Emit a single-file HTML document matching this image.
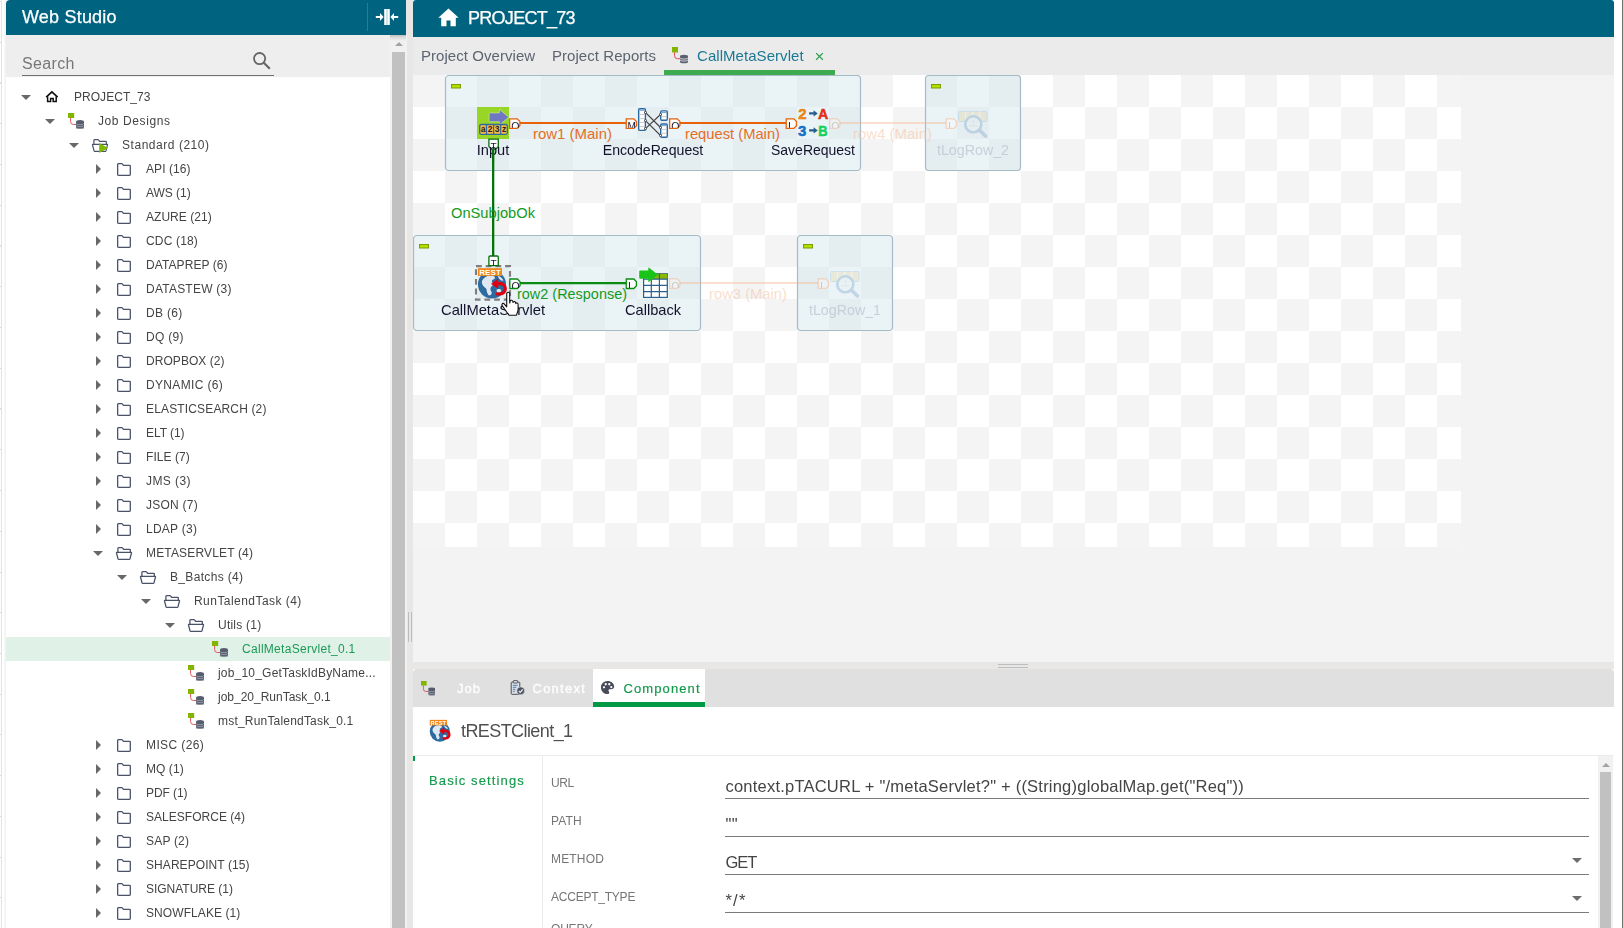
<!DOCTYPE html>
<html lang="en">
<head>
<meta charset="utf-8">
<title>Web Studio</title>
<style>
*{box-sizing:border-box;margin:0;padding:0}
html,body{width:1623px;height:928px;overflow:hidden;background:#fff}
body{font-family:"Liberation Sans",Arial,sans-serif;position:relative;color:#444}
.abs{position:absolute}
.gl{left:0;top:0;width:1623px;height:928px;will-change:transform}
#edgeL{left:1px;top:0;width:1px;height:928px;background:#e2e2e2}
#edgeL2{left:4px;top:0;width:2px;height:928px;background:linear-gradient(to right,#fafafa,#efefef)}
#ticks{left:0;top:0;width:1px;height:928px;background:repeating-linear-gradient(to bottom,transparent 0,transparent 1px,#dcdcdc 1px,#dcdcdc 2px,transparent 2px,transparent 40.750px)}
#edgeR{left:1622px;top:0;width:1px;height:928px;background:#6e6e6e}
/* sidebar */
#sbh{left:6px;top:0;width:400px;height:35px;background:#006480;border-top-left-radius:4px;color:#fff}
#sbh .t{position:absolute;left:16px;top:6px;font-size:18px;line-height:22px;letter-spacing:.2px;white-space:nowrap;-webkit-text-stroke:.25px #fff}
#sbh .sep{position:absolute;left:361px;top:3px;width:1px;height:28px;background:#2b7c93}
#sbh svg{position:absolute;left:369px;top:8px}
#search{left:6px;top:35px;width:384px;height:42px;background:#eeeeee}
#search .ph{position:absolute;left:16px;top:19px;font-size:16px;line-height:20px;color:#777;letter-spacing:.35px}
#search .ul{position:absolute;left:16px;top:40px;width:252px;height:1px;background:#707070}
#search svg{position:absolute;left:245px;top:15px}
#tree{left:6px;top:77px;width:384px;height:851px;background:#fff;padding-top:8px;overflow:hidden}
.tr{height:24px;display:flex;align-items:center;white-space:nowrap;font-size:12px;color:#444}
.tr.sel{background:#e0f1e8;color:#1b9a55}
.aw{width:26px;height:24px;flex:none;position:relative}
.ad{position:absolute;left:3px;top:9.5px;border-left:5px solid transparent;border-right:5px solid transparent;border-top:5px solid #686868}
.ar{position:absolute;left:6px;top:7px;border-top:5px solid transparent;border-bottom:5px solid transparent;border-left:5.5px solid #686868}
.ti{width:16px;height:16px;flex:none;display:block;overflow:visible}
.tx{margin-left:14px;position:relative;top:-.5px}
#sbar{z-index:2;left:390px;top:35px;width:17px;height:893px;background:#f1f1f1}
#sbar .sh{position:absolute;left:0;top:0;width:16px;height:6px;background:linear-gradient(#bdbdbd,#dedede 45%,#f1f1f1)}
#sbar .up{position:absolute;left:4.500px;top:7px;border-left:4px solid transparent;border-right:4px solid transparent;border-bottom:4px solid #a3a3a3}
#sbar .th{position:absolute;left:2px;top:17px;width:13px;height:880px;background:#c1c1c1}
#split{left:406px;top:0;width:7px;height:928px;background:#e9e6e6}
#split i{position:absolute;top:612px;width:1px;height:30px;background:#bdbdbd}
/* main */
#mh{left:413px;top:0;width:1201px;height:37px;background:#006480;border-top-left-radius:3px;border-top-right-radius:3px;color:#fff}
#mh svg{position:absolute;left:25px;top:8px}
#mh .t{position:absolute;left:55px;top:7px;font-size:18px;line-height:22px;letter-spacing:-.72px;white-space:nowrap;-webkit-text-stroke:.25px #fff}
#tabs{left:413px;top:37px;width:1201px;height:38px;background:#ebebeb;font-size:15px;color:#5d6470;letter-spacing:.05px}
#tabs span{position:absolute;top:9px;line-height:20px;white-space:nowrap}
#tabs .act{color:#1b7893}
#tabs .bar{position:absolute;left:251px;top:33px;width:171px;height:5px;background:#3fab50}
#canvas{left:413px;top:75px;width:1201px;height:587px;background:#f3f3f3}
#hsplit{left:413px;top:662px;width:1201px;height:7px;background:#e9e6e6}
#hsplit i{position:absolute;left:585px;width:30px;height:1px;background:#bdbdbd}
/* bottom */
#btabs{left:413px;top:669px;width:1201px;height:38px;background:#e0e0e0;border-top-left-radius:4px;border-top-right-radius:4px;font-size:13px;color:#fdfdfd;-webkit-text-stroke:.4px}
#btabs span{position:absolute;top:12px;line-height:16px;white-space:nowrap}
#btabs .on{position:absolute;left:180px;top:0;width:112px;height:38px;background:#fff;border-bottom:5px solid #009a44}
#btabs svg{position:absolute}
#bpanel{left:413px;top:707px;width:1201px;height:221px;background:#fff}
#bpanel .ttl{position:absolute;left:48px;top:12px;font-size:18px;line-height:24px;color:#505050;letter-spacing:-.58px;white-space:nowrap}
#bpanel .hr{position:absolute;left:0;top:48px;width:1201px;height:1px;background:#ececec}
#bpanel .vr{position:absolute;left:129px;top:49px;width:1px;height:172px;background:#ececec}
#bpanel .gm{position:absolute;left:0;top:49px;width:2px;height:5px;background:#009a44}
#bpanel .nav{position:absolute;left:16px;top:65.700px;font-size:13px;line-height:16px;color:#149a4c;letter-spacing:1.12px;white-space:nowrap;-webkit-text-stroke:.15px #149a4c}
.lb{position:absolute;left:138px;font-size:12px;line-height:14px;color:#757575;letter-spacing:.2px;white-space:nowrap}
.vl{position:absolute;left:312.500px;font-size:16.500px;line-height:20px;color:#444;white-space:nowrap}
.ul2{position:absolute;left:312px;width:864px;height:1px;background:#7a7a7a}
.dd{position:absolute;left:1159px;border-left:5.5px solid transparent;border-right:5.5px solid transparent;border-top:5.5px solid #6d6d6d}
#bsb{position:absolute;left:1185px;top:49px;width:15px;height:172px;background:#f1f1f1}
#bsb .up{position:absolute;left:4px;top:7px;border-left:4px solid transparent;border-right:4px solid transparent;border-bottom:4px solid #a3a3a3}
#bsb .th{position:absolute;left:2px;top:16px;width:11px;height:160px;background:#c1c1c1}
</style>
</head>
<body>
<div class="abs gl">
<div class="abs" id="edgeL"></div><div class="abs" id="edgeL2"></div><div class="abs" id="ticks"></div>
<div class="abs" id="edgeR"></div>
<div class="abs" id="sbh"><span class="t">Web Studio</span><i class="sep"></i>
<svg width="24" height="18" viewBox="0 0 24 18"><path d="M9.2 1h5.6v16H9.2z" fill="#fff"/><path d="M11.3 1h1.4v16h-1.4z" fill="#bcd9e1"/><path d="M.8 7.900h4.200V4.900L8.600 9 5 13.100V10.100H.8zM23.200 7.900H19V4.900L15.400 9l3.600 4.100V10.100h4.200z" fill="#fff"/></svg>
</div>
<div class="abs" id="search"><span class="ph">Search</span><i class="ul"></i>
<svg width="22" height="22" viewBox="0 0 22 22"><circle cx="8.6" cy="8.6" r="5.6" fill="none" stroke="#666" stroke-width="1.8"/><path d="M12.8 12.8l6 6" stroke="#666" stroke-width="2.2"/></svg>
</div>
<div class="abs" id="tree">
<div class="tr" style="padding-left:12px"><span class="aw"><i class="ad"></i></span><svg class="ti" viewBox="0 0 16 16"><path d="M2.2 8.1 7.9 2.9l5.7 5.200" fill="none" stroke="#111" stroke-width="1.700"/><path d="M3.600 7.400v5.200h3V9.400h2.600v3.200h3V7.400" fill="none" stroke="#111" stroke-width="1.500"/></svg><span class="tx" style="letter-spacing:0.037px">PROJECT_73</span></div>
<div class="tr" style="padding-left:36px"><span class="aw"><i class="ad"></i></span><svg class="ti" viewBox="0 0 16 16"><rect x="0" y="0" width="6.2" height="5" fill="#82b400"/><path d="M2.6 5v3.6q0 2.9 2.9 2.9h2.7" fill="none" stroke="#e25555" stroke-width="1"/><path d="M8 8.6a4 1.6 0 0 1 8 0v5.8a4 1.6 0 0 1-8 0z" fill="#565c6c"/><path d="M8 10.3a4 1.4 0 0 0 8 0M8 12.3a4 1.4 0 0 0 8 0M8 14.3a4 1.4 0 0 0 8 0" fill="none" stroke="#b9bec8" stroke-width=".6"/></svg><span class="tx" style="letter-spacing:0.587px">Job Designs</span></div>
<div class="tr" style="padding-left:60px"><span class="aw"><i class="ad"></i></span><svg class="ti" viewBox="0 0 16 16"><path d="M1.900 7.300V3.400q0-.75.750-.75h3.200q.4 0 .650.3l1.100 1.400h6q.750 0 .750.750V7.300M.9 7.300h14.200q.5 0 .4.500l-1.500 5.900q-.2.650-.850.650H2.850q-.650 0-.850-.650L.5 7.800q-.1-.5.400-.5z" fill="none" stroke="#4a5268" stroke-width="1.200"/><path d="M7.200 6v10.100l8.800-5z" fill="#82b800"/></svg><span class="tx" style="letter-spacing:0.538px">Standard (210)</span></div>
<div class="tr" style="padding-left:84px"><span class="aw"><i class="ar"></i></span><svg class="ti" viewBox="0 0 16 16"><path d="M1.650 3.400q0-.75.750-.75h3.300q.4 0 .650.3l1.100 1.400h6.100q.750 0 .750.750v8.500q0 .750-.750.750H2.400q-.750 0-.750-.750z" fill="none" stroke="#4a5268" stroke-width="1.300"/></svg><span class="tx" style="letter-spacing:0.086px">API (16)</span></div>
<div class="tr" style="padding-left:84px"><span class="aw"><i class="ar"></i></span><svg class="ti" viewBox="0 0 16 16"><path d="M1.650 3.400q0-.75.750-.75h3.300q.4 0 .650.3l1.100 1.400h6.100q.750 0 .750.750v8.500q0 .750-.750.750H2.400q-.750 0-.750-.750z" fill="none" stroke="#4a5268" stroke-width="1.300"/></svg><span class="tx" style="letter-spacing:-0.027px">AWS (1)</span></div>
<div class="tr" style="padding-left:84px"><span class="aw"><i class="ar"></i></span><svg class="ti" viewBox="0 0 16 16"><path d="M1.650 3.400q0-.75.750-.75h3.300q.4 0 .650.3l1.100 1.400h6.100q.750 0 .750.750v8.500q0 .750-.750.750H2.400q-.750 0-.750-.750z" fill="none" stroke="#4a5268" stroke-width="1.300"/></svg><span class="tx" style="letter-spacing:0.036px">AZURE (21)</span></div>
<div class="tr" style="padding-left:84px"><span class="aw"><i class="ar"></i></span><svg class="ti" viewBox="0 0 16 16"><path d="M1.650 3.400q0-.75.750-.75h3.300q.4 0 .650.3l1.100 1.400h6.100q.750 0 .750.750v8.500q0 .750-.750.750H2.400q-.750 0-.750-.750z" fill="none" stroke="#4a5268" stroke-width="1.300"/></svg><span class="tx" style="letter-spacing:0.166px">CDC (18)</span></div>
<div class="tr" style="padding-left:84px"><span class="aw"><i class="ar"></i></span><svg class="ti" viewBox="0 0 16 16"><path d="M1.650 3.400q0-.75.750-.75h3.300q.4 0 .650.3l1.100 1.400h6.100q.750 0 .750.750v8.500q0 .750-.750.750H2.400q-.750 0-.750-.750z" fill="none" stroke="#4a5268" stroke-width="1.300"/></svg><span class="tx" style="letter-spacing:0.084px">DATAPREP (6)</span></div>
<div class="tr" style="padding-left:84px"><span class="aw"><i class="ar"></i></span><svg class="ti" viewBox="0 0 16 16"><path d="M1.650 3.400q0-.75.750-.75h3.300q.4 0 .650.3l1.100 1.400h6.100q.750 0 .750.750v8.500q0 .750-.750.750H2.400q-.750 0-.750-.750z" fill="none" stroke="#4a5268" stroke-width="1.300"/></svg><span class="tx" style="letter-spacing:0.226px">DATASTEW (3)</span></div>
<div class="tr" style="padding-left:84px"><span class="aw"><i class="ar"></i></span><svg class="ti" viewBox="0 0 16 16"><path d="M1.650 3.400q0-.75.750-.75h3.300q.4 0 .650.3l1.100 1.400h6.100q.750 0 .750.750v8.500q0 .750-.750.750H2.400q-.750 0-.750-.750z" fill="none" stroke="#4a5268" stroke-width="1.300"/></svg><span class="tx" style="letter-spacing:0.305px">DB (6)</span></div>
<div class="tr" style="padding-left:84px"><span class="aw"><i class="ar"></i></span><svg class="ti" viewBox="0 0 16 16"><path d="M1.650 3.400q0-.75.750-.75h3.300q.4 0 .650.3l1.100 1.400h6.100q.750 0 .750.750v8.500q0 .750-.750.750H2.400q-.750 0-.750-.750z" fill="none" stroke="#4a5268" stroke-width="1.300"/></svg><span class="tx" style="letter-spacing:0.283px">DQ (9)</span></div>
<div class="tr" style="padding-left:84px"><span class="aw"><i class="ar"></i></span><svg class="ti" viewBox="0 0 16 16"><path d="M1.650 3.400q0-.75.750-.75h3.300q.4 0 .650.3l1.100 1.400h6.100q.750 0 .750.750v8.500q0 .750-.750.750H2.400q-.750 0-.750-.750z" fill="none" stroke="#4a5268" stroke-width="1.300"/></svg><span class="tx" style="letter-spacing:0.053px">DROPBOX (2)</span></div>
<div class="tr" style="padding-left:84px"><span class="aw"><i class="ar"></i></span><svg class="ti" viewBox="0 0 16 16"><path d="M1.650 3.400q0-.75.750-.75h3.300q.4 0 .650.3l1.100 1.400h6.100q.750 0 .750.750v8.500q0 .750-.750.750H2.400q-.750 0-.750-.750z" fill="none" stroke="#4a5268" stroke-width="1.300"/></svg><span class="tx" style="letter-spacing:0.341px">DYNAMIC (6)</span></div>
<div class="tr" style="padding-left:84px"><span class="aw"><i class="ar"></i></span><svg class="ti" viewBox="0 0 16 16"><path d="M1.650 3.400q0-.75.750-.75h3.300q.4 0 .650.3l1.100 1.400h6.100q.750 0 .750.750v8.500q0 .750-.750.750H2.400q-.750 0-.750-.750z" fill="none" stroke="#4a5268" stroke-width="1.300"/></svg><span class="tx" style="letter-spacing:0.151px">ELASTICSEARCH (2)</span></div>
<div class="tr" style="padding-left:84px"><span class="aw"><i class="ar"></i></span><svg class="ti" viewBox="0 0 16 16"><path d="M1.650 3.400q0-.75.750-.75h3.300q.4 0 .650.3l1.100 1.400h6.100q.750 0 .750.750v8.500q0 .750-.750.750H2.400q-.750 0-.750-.750z" fill="none" stroke="#4a5268" stroke-width="1.300"/></svg><span class="tx" style="letter-spacing:-0.058px">ELT (1)</span></div>
<div class="tr" style="padding-left:84px"><span class="aw"><i class="ar"></i></span><svg class="ti" viewBox="0 0 16 16"><path d="M1.650 3.400q0-.75.750-.75h3.300q.4 0 .650.3l1.100 1.400h6.100q.750 0 .750.750v8.500q0 .750-.750.750H2.400q-.750 0-.750-.750z" fill="none" stroke="#4a5268" stroke-width="1.300"/></svg><span class="tx" style="letter-spacing:0.045px">FILE (7)</span></div>
<div class="tr" style="padding-left:84px"><span class="aw"><i class="ar"></i></span><svg class="ti" viewBox="0 0 16 16"><path d="M1.650 3.400q0-.75.750-.75h3.300q.4 0 .650.3l1.100 1.400h6.100q.750 0 .750.750v8.500q0 .750-.750.750H2.400q-.750 0-.750-.750z" fill="none" stroke="#4a5268" stroke-width="1.300"/></svg><span class="tx" style="letter-spacing:0.429px">JMS (3)</span></div>
<div class="tr" style="padding-left:84px"><span class="aw"><i class="ar"></i></span><svg class="ti" viewBox="0 0 16 16"><path d="M1.650 3.400q0-.75.750-.75h3.300q.4 0 .650.3l1.100 1.400h6.100q.750 0 .750.750v8.500q0 .750-.750.750H2.400q-.750 0-.750-.750z" fill="none" stroke="#4a5268" stroke-width="1.300"/></svg><span class="tx" style="letter-spacing:0.248px">JSON (7)</span></div>
<div class="tr" style="padding-left:84px"><span class="aw"><i class="ar"></i></span><svg class="ti" viewBox="0 0 16 16"><path d="M1.650 3.400q0-.75.750-.75h3.300q.4 0 .650.3l1.100 1.400h6.100q.750 0 .750.750v8.500q0 .750-.750.750H2.400q-.750 0-.750-.750z" fill="none" stroke="#4a5268" stroke-width="1.300"/></svg><span class="tx" style="letter-spacing:0.257px">LDAP (3)</span></div>
<div class="tr" style="padding-left:84px"><span class="aw"><i class="ad"></i></span><svg class="ti" viewBox="0 0 16 16"><path d="M1.900 7.300V3.400q0-.75.750-.75h3.200q.4 0 .650.3l1.100 1.400h6q.750 0 .750.750V7.300M.9 7.300h14.200q.5 0 .4.500l-1.500 5.900q-.2.650-.850.650H2.850q-.650 0-.850-.650L.5 7.800q-.1-.5.400-.5z" fill="none" stroke="#4a5268" stroke-width="1.300"/></svg><span class="tx" style="letter-spacing:0.160px">METASERVLET (4)</span></div>
<div class="tr" style="padding-left:108px"><span class="aw"><i class="ad"></i></span><svg class="ti" viewBox="0 0 16 16"><path d="M1.900 7.300V3.400q0-.75.750-.75h3.200q.4 0 .650.3l1.100 1.400h6q.750 0 .750.750V7.300M.9 7.300h14.200q.5 0 .4.500l-1.500 5.900q-.2.650-.850.650H2.850q-.650 0-.850-.650L.5 7.800q-.1-.5.400-.5z" fill="none" stroke="#4a5268" stroke-width="1.300"/></svg><span class="tx" style="letter-spacing:0.327px">B_Batchs (4)</span></div>
<div class="tr" style="padding-left:132px"><span class="aw"><i class="ad"></i></span><svg class="ti" viewBox="0 0 16 16"><path d="M1.900 7.300V3.400q0-.75.750-.75h3.200q.4 0 .650.3l1.100 1.400h6q.750 0 .750.750V7.300M.9 7.300h14.200q.5 0 .4.500l-1.500 5.900q-.2.650-.850.650H2.850q-.650 0-.850-.650L.5 7.800q-.1-.5.400-.5z" fill="none" stroke="#4a5268" stroke-width="1.300"/></svg><span class="tx" style="letter-spacing:0.455px">RunTalendTask (4)</span></div>
<div class="tr" style="padding-left:156px"><span class="aw"><i class="ad"></i></span><svg class="ti" viewBox="0 0 16 16"><path d="M1.900 7.300V3.400q0-.75.750-.75h3.200q.4 0 .650.3l1.100 1.400h6q.750 0 .750.750V7.300M.9 7.300h14.200q.5 0 .4.500l-1.500 5.900q-.2.650-.850.650H2.850q-.650 0-.850-.650L.5 7.800q-.1-.5.400-.5z" fill="none" stroke="#4a5268" stroke-width="1.300"/></svg><span class="tx" style="letter-spacing:0.228px">Utils (1)</span></div>
<div class="tr sel" style="padding-left:180px"><span class="aw"></span><svg class="ti" viewBox="0 0 16 16"><rect x="0" y="0" width="6.2" height="5" fill="#82b400"/><path d="M2.6 5v3.6q0 2.9 2.9 2.9h2.7" fill="none" stroke="#e25555" stroke-width="1"/><path d="M8 8.6a4 1.6 0 0 1 8 0v5.8a4 1.6 0 0 1-8 0z" fill="#565c6c"/><path d="M8 10.3a4 1.4 0 0 0 8 0M8 12.3a4 1.4 0 0 0 8 0M8 14.3a4 1.4 0 0 0 8 0" fill="none" stroke="#b9bec8" stroke-width=".6"/></svg><span class="tx" style="letter-spacing:0.291px">CallMetaServlet_0.1</span></div>
<div class="tr" style="padding-left:156px"><span class="aw"></span><svg class="ti" viewBox="0 0 16 16"><rect x="0" y="0" width="6.2" height="5" fill="#82b400"/><path d="M2.6 5v3.6q0 2.9 2.9 2.9h2.7" fill="none" stroke="#e25555" stroke-width="1"/><path d="M8 8.6a4 1.6 0 0 1 8 0v5.8a4 1.6 0 0 1-8 0z" fill="#565c6c"/><path d="M8 10.3a4 1.4 0 0 0 8 0M8 12.3a4 1.4 0 0 0 8 0M8 14.3a4 1.4 0 0 0 8 0" fill="none" stroke="#b9bec8" stroke-width=".6"/></svg><span class="tx" style="letter-spacing:0.202px">job_10_GetTaskIdByName...</span></div>
<div class="tr" style="padding-left:156px"><span class="aw"></span><svg class="ti" viewBox="0 0 16 16"><rect x="0" y="0" width="6.2" height="5" fill="#82b400"/><path d="M2.6 5v3.6q0 2.9 2.9 2.9h2.7" fill="none" stroke="#e25555" stroke-width="1"/><path d="M8 8.6a4 1.6 0 0 1 8 0v5.8a4 1.6 0 0 1-8 0z" fill="#565c6c"/><path d="M8 10.3a4 1.4 0 0 0 8 0M8 12.3a4 1.4 0 0 0 8 0M8 14.3a4 1.4 0 0 0 8 0" fill="none" stroke="#b9bec8" stroke-width=".6"/></svg><span class="tx" style="letter-spacing:-0.004px">job_20_RunTask_0.1</span></div>
<div class="tr" style="padding-left:156px"><span class="aw"></span><svg class="ti" viewBox="0 0 16 16"><rect x="0" y="0" width="6.2" height="5" fill="#82b400"/><path d="M2.6 5v3.6q0 2.9 2.9 2.9h2.7" fill="none" stroke="#e25555" stroke-width="1"/><path d="M8 8.6a4 1.6 0 0 1 8 0v5.8a4 1.6 0 0 1-8 0z" fill="#565c6c"/><path d="M8 10.3a4 1.4 0 0 0 8 0M8 12.3a4 1.4 0 0 0 8 0M8 14.3a4 1.4 0 0 0 8 0" fill="none" stroke="#b9bec8" stroke-width=".6"/></svg><span class="tx" style="letter-spacing:0.194px">mst_RunTalendTask_0.1</span></div>
<div class="tr" style="padding-left:84px"><span class="aw"><i class="ar"></i></span><svg class="ti" viewBox="0 0 16 16"><path d="M1.650 3.400q0-.75.750-.75h3.300q.4 0 .650.3l1.100 1.400h6.100q.750 0 .750.750v8.500q0 .750-.750.750H2.400q-.750 0-.750-.750z" fill="none" stroke="#4a5268" stroke-width="1.300"/></svg><span class="tx" style="letter-spacing:0.390px">MISC (26)</span></div>
<div class="tr" style="padding-left:84px"><span class="aw"><i class="ar"></i></span><svg class="ti" viewBox="0 0 16 16"><path d="M1.650 3.400q0-.75.750-.75h3.300q.4 0 .650.3l1.100 1.400h6.100q.750 0 .750.750v8.500q0 .750-.750.750H2.400q-.750 0-.750-.750z" fill="none" stroke="#4a5268" stroke-width="1.300"/></svg><span class="tx" style="letter-spacing:0.059px">MQ (1)</span></div>
<div class="tr" style="padding-left:84px"><span class="aw"><i class="ar"></i></span><svg class="ti" viewBox="0 0 16 16"><path d="M1.650 3.400q0-.75.750-.75h3.300q.4 0 .650.3l1.100 1.400h6.100q.750 0 .750.750v8.500q0 .750-.750.750H2.400q-.750 0-.750-.750z" fill="none" stroke="#4a5268" stroke-width="1.300"/></svg><span class="tx" style="letter-spacing:-0.086px">PDF (1)</span></div>
<div class="tr" style="padding-left:84px"><span class="aw"><i class="ar"></i></span><svg class="ti" viewBox="0 0 16 16"><path d="M1.650 3.400q0-.75.750-.75h3.300q.4 0 .650.3l1.100 1.400h6.100q.750 0 .750.750v8.500q0 .750-.750.750H2.400q-.750 0-.750-.750z" fill="none" stroke="#4a5268" stroke-width="1.300"/></svg><span class="tx" style="letter-spacing:0.028px">SALESFORCE (4)</span></div>
<div class="tr" style="padding-left:84px"><span class="aw"><i class="ar"></i></span><svg class="ti" viewBox="0 0 16 16"><path d="M1.650 3.400q0-.75.750-.75h3.300q.4 0 .650.3l1.100 1.400h6.100q.750 0 .750.750v8.500q0 .750-.750.750H2.400q-.750 0-.750-.750z" fill="none" stroke="#4a5268" stroke-width="1.300"/></svg><span class="tx" style="letter-spacing:0.200px">SAP (2)</span></div>
<div class="tr" style="padding-left:84px"><span class="aw"><i class="ar"></i></span><svg class="ti" viewBox="0 0 16 16"><path d="M1.650 3.400q0-.75.750-.75h3.300q.4 0 .650.3l1.100 1.400h6.100q.750 0 .750.750v8.500q0 .750-.750.750H2.400q-.750 0-.750-.750z" fill="none" stroke="#4a5268" stroke-width="1.300"/></svg><span class="tx" style="letter-spacing:0.069px">SHAREPOINT (15)</span></div>
<div class="tr" style="padding-left:84px"><span class="aw"><i class="ar"></i></span><svg class="ti" viewBox="0 0 16 16"><path d="M1.650 3.400q0-.75.750-.75h3.300q.4 0 .650.3l1.100 1.400h6.100q.750 0 .750.750v8.500q0 .750-.750.750H2.400q-.750 0-.750-.750z" fill="none" stroke="#4a5268" stroke-width="1.300"/></svg><span class="tx" style="letter-spacing:-0.017px">SIGNATURE (1)</span></div>
<div class="tr" style="padding-left:84px"><span class="aw"><i class="ar"></i></span><svg class="ti" viewBox="0 0 16 16"><path d="M1.650 3.400q0-.75.750-.75h3.300q.4 0 .650.3l1.100 1.400h6.100q.750 0 .750.750v8.500q0 .750-.750.750H2.400q-.750 0-.750-.750z" fill="none" stroke="#4a5268" stroke-width="1.300"/></svg><span class="tx" style="letter-spacing:0.080px">SNOWFLAKE (1)</span></div>
</div>
<div class="abs" id="sbar"><i class="sh"></i><i class="up"></i><i class="th"></i></div>
<div class="abs" id="split"><i style="left:2px"></i><i style="left:5px"></i></div>
<div class="abs" id="mh">
<svg width="21" height="19" viewBox="0 0 21 19"><path d="M10.5.6L.3 9.8h2.9v8.4h5.3v-5.7h4v5.7h5.3V9.8h2.9z" fill="#fff"/></svg>
<span class="t">PROJECT_73</span></div>
<div class="abs" id="tabs">
<span style="left:8px">Project Overview</span>
<span style="left:139px">Project Reports</span>
<svg style="position:absolute;left:258px;top:9px" width="18" height="18" viewBox="0 0 18 18"><rect x="1" y="1" width="6" height="5.5" fill="#82b400"/><path d="M3.5 6.5v3.2q0 3 3 3h3" fill="none" stroke="#e0484f" stroke-width="1"/><path d="M9 10.2a4 1.5 0 0 1 8 0v5.6a4 1.5 0 0 1-8 0z" fill="#5b6070"/><path d="M9 11.8a4 1.3 0 0 0 8 0M9 13.8a4 1.3 0 0 0 8 0" fill="none" stroke="#fff" stroke-width=".7"/></svg>
<span class="act" style="left:284px">CallMetaServlet</span>
<span style="left:401.500px;top:9.500px;font-size:17px;color:#2f9e4f;letter-spacing:0">×</span>
<i class="bar"></i>
</div>
</div>
<div class="abs" id="canvas">
<svg width="1201" height="587" viewBox="0 0 1201 587" style="position:absolute;left:0;top:0;font-family:'Liberation Sans',Arial,sans-serif">
<defs>
<pattern id="chk" width="64" height="64" patternUnits="userSpaceOnUse"><rect x="32" y="0" width="32" height="32" fill="#fff"/><rect x="0" y="32" width="32" height="32" fill="#fff"/></pattern>
<g id="minus"><rect x=".5" y=".5" width="9" height="3.5" fill="#b4e000" stroke="#7d9d00" stroke-width="1"/></g>
<g id="rest">
<circle cx="15" cy="17.500" r="14" fill="#2c6aa0"/>
<path d="M5 14c1.500-3.500 5.500-5.500 8.500-5.500 2 0 4.500.8 4.500 2.200 0 1.800-2.200 1.200-3 2.800-.6 1.300 1.200 2 1 3.800-.3 2.200-2.600 2.500-2.600 4.700 0 1.800 1.700 2.600 1.300 4.500-.3 1.300-1.500 2-2.800 2-1.500-1.500-2.300-3.800-2.300-5.500 0-1.600-1.400-2.300-2.600-3.300C5.600 18.400 4.400 16 5 14zM21 9c2 .5 4.500 2.300 5.500 4.500-1.500.5-3-.2-3.800-1.300-.7-1-1.900-1.700-1.700-3.200zM20 22.500c1.500-.8 3.200-.6 4 .2.700.8-.3 2.500-1.300 3.200-1.200.8-2.700-.2-2.900-1.400-.1-.8-.4-1.600.2-2z" fill="#e9eff4" fill-opacity=".95"/>
<rect x="1" y="1.200" width="24" height="7.700" fill="#f0861a"/>
<text x="13" y="8" font-size="8" font-weight="bold" fill="#fff" text-anchor="middle" textLength="21.600" lengthAdjust="spacing">REST</text>
<path d="M20.300 16.700H23.200a5.100 5.100 0 0 1 0 10.200H20.300" fill="none" stroke="#e0000f" stroke-width="3.300" stroke-linecap="round"/>
<path d="M14.500 16.800l6.300-4.600v9.200z" fill="#e0000f" stroke="#e0000f" stroke-width=".6" stroke-linejoin="round"/>
</g>
<g id="logrow">
<rect x="1.5" y="4.5" width="28.5" height="10" rx="1" fill="#e6d49a" stroke="#8fb4da" stroke-width="1"/><path d="M8.6 4.5v10M15.7 4.500v10M22.800 4.500v10" stroke="#f4f6f8" stroke-width="1.200"/>
<circle cx="16.300" cy="17.300" r="8" fill="#eef3f7" fill-opacity=".75" stroke="#5f8fbe" stroke-width="2.600"/><path d="M22.500 23.300l6 5.700" stroke="#5f8fbe" stroke-width="3.600" stroke-linecap="round"/><path d="M16.300 13v6M12 19h8.600" stroke="#bcd0c0" stroke-width="1"/>
</g>

<clipPath id="cc">
<rect x="97.2" y="44.5" width="9" height="8.300"/>
<rect x="213.8" y="44.5" width="9" height="8.300"/>
<rect x="257.2" y="44.5" width="9" height="8.300"/>
<rect x="373.8" y="44.5" width="9" height="8.300"/>
<rect x="417.2" y="44.5" width="9" height="8.300"/>
<rect x="533.8" y="44.5" width="9" height="8.300"/>
<rect x="257.2" y="204.5" width="9" height="8.300"/>
<rect x="405.8" y="204.5" width="9" height="8.300"/>
<rect x="97.4" y="204.6" width="9" height="8.300"/>
<rect x="213.8" y="204.6" width="9" height="8.300"/>
<rect x="76.400" y="64" width="8.400" height="9.800"/><rect x="76.400" y="181.500" width="8.400" height="9"/>
</clipPath>
</defs>
<rect x="0" y="0" width="1048" height="472" fill="#f4f4f4"/>
<rect x="0" y="0" width="1048" height="472" fill="url(#chk)"/>
<g fill="#cde2ea" fill-opacity=".42" stroke="#a6bbca" stroke-width="1.200">
<rect x="32.500" y=".5" width="415" height="95" rx="3.500"/>
<rect x="512.500" y=".5" width="95" height="95" rx="3.500"/>
<rect x=".5" y="160.500" width="287" height="95" rx="3.500"/>
<rect x="384.500" y="160.500" width="95" height="95" rx="3.500"/>
</g>
<use href="#minus" x="38" y="9"/><use href="#minus" x="518" y="9"/><use href="#minus" x="6" y="169"/><use href="#minus" x="390" y="169"/>
<path d="M107 48H213M267 48H373" stroke="#e8620a" stroke-width="2" fill="none"/>
<path d="M427 48H533M267 208H405" stroke="#f4b48c" stroke-opacity=".42" stroke-width="2" fill="none"/>
<path d="M80.150 74V181M107 208.100H213" stroke="#0b8c10" stroke-width="2.200" fill="none"/>
<path d="M80.150 74V181" stroke="#0a6e0c" stroke-width="1.900" fill="none"/>
<g font-size="14.500" fill="#e46f28">
<text x="120" y="63.500" textLength="79" lengthAdjust="spacingAndGlyphs">row1 (Main)</text>
<text x="272" y="63.500" textLength="95" lengthAdjust="spacingAndGlyphs">request (Main)</text>
</g>
<g font-size="14.500" fill="#f5c2a2" fill-opacity=".55">
<text x="440" y="63.500" textLength="79" lengthAdjust="spacingAndGlyphs">row4 (Main)</text>
<text x="296" y="224" textLength="78" lengthAdjust="spacingAndGlyphs">row3 (Main)</text>
</g>
<g font-size="14.500" fill="#149a1e">
<text x="38" y="143" textLength="84" lengthAdjust="spacingAndGlyphs">OnSubjobOk</text>
<text x="104" y="224" textLength="110" lengthAdjust="spacingAndGlyphs">row2 (Response)</text>
</g>
<!-- Input icon -->
<g transform="translate(64,32)">
<rect width="32" height="32" fill="#97d626"/>
<path d="M12.600 5.900h9.800V2.400l9.400 7.750-9.400 7.750V14.700h-9.800q-.5 0-.5-.5V6.400q0-.5.5-.5z" fill="#7078c4" stroke="#c3e68a" stroke-width=".7"/>
<rect x="2.700" y="17.500" width="27.600" height="9.800" rx="1.500" fill="#f8b840" stroke="#2f699e" stroke-width="1.300"/>
<path d="M9.500 17.500v9.800M16.600 17.500v9.800M23.700 17.500v9.800" stroke="#2f699e" stroke-width="1.200"/>
<g font-size="8.500" font-weight="bold" fill="#222" text-anchor="middle"><text x="6.100" y="25.300">a</text><text x="13.100" y="25.400">2</text><text x="20.200" y="25.400">3</text><text x="27" y="25.300">z</text></g>
</g>
<!-- tMap icon -->
<g transform="translate(224,32)">
<rect x="1.700" y="1.700" width="6.700" height="21.700" rx="1.200" fill="#fff" stroke="#2c69a1" stroke-width="1.400"/>
<path d="M2.400 3.300h5.300" stroke="#7ea8cf" stroke-width="1.200"/><path d="M2.600 7.500h5M2.600 11.600h5M2.600 15.500h5M2.600 19.600h5" stroke="#c4c4c4" stroke-width=".9"/>
<rect x="23.700" y="3.900" width="6.600" height="9.300" rx="1.200" fill="#fff" stroke="#2c69a1" stroke-width="1.400"/><path d="M24.400 5.500h5.200" stroke="#7ea8cf" stroke-width="1.200"/><path d="M24.600 9.500h5" stroke="#c4c4c4" stroke-width=".9"/>
<rect x="23.700" y="17" width="6.600" height="13.200" rx="1.200" fill="#fff" stroke="#2c69a1" stroke-width="1.400"/><path d="M24.400 18.600h5.200" stroke="#7ea8cf" stroke-width="1.200"/><path d="M24.600 22.400h5M24.600 26.300h5" stroke="#c4c4c4" stroke-width=".9"/>
<path d="M8.500 5.500l15 15M8.500 13.600l15 14.900M8.500 21.600l15-14.100" stroke="#444" stroke-width="1.100" fill="none"/>
<g fill="#fff" stroke="#444" stroke-width=".8"><rect x="7.500" y="4.500" width="2" height="2" rx=".5"/><rect x="7.500" y="12.600" width="2" height="2" rx=".5"/><rect x="7.500" y="20.600" width="2" height="2" rx=".5"/><rect x="22.500" y="6.500" width="2" height="2" rx=".5"/><rect x="22.500" y="19.500" width="2" height="2" rx=".5"/><rect x="22.500" y="27.500" width="2" height="2" rx=".5"/></g>
</g>
<!-- tConvertType icon -->
<g transform="translate(384,32)" font-weight="bold" font-size="15" stroke-linejoin="round">
<text x="1.200" y="11.700" fill="#f08a1a" stroke="#e07a10" stroke-width=".5">2</text><text x="20.900" y="11.700" fill="#f03010" stroke="#c82408" stroke-width=".5" textLength="10.300" lengthAdjust="spacingAndGlyphs">A</text>
<text x="1" y="28.900" fill="#1578d0" stroke="#0f68bc" stroke-width=".5">3</text><text x="21.300" y="28.900" fill="#10e060" stroke="#0cbc4c" stroke-width=".5" textLength="9.300" lengthAdjust="spacingAndGlyphs">B</text>
<path d="M12.100 5.250h4.500V3.300l4.200 3.100-4.200 3.100V7.550h-4.500zM12.100 22.250h4.500v-1.950l4.200 3.100-4.200 3.100v-1.950h-4.500z" fill="#2a6090"/>
</g>
<g opacity=".3"><use href="#logrow" x="544" y="32"/><use href="#logrow" x="416" y="192"/></g>
<!-- callback icon -->
<g transform="translate(224,192)">
<rect x="6.600" y="6.700" width="23.700" height="23.700" fill="#fff" stroke="#2a5f90" stroke-width="1.200"/>
<rect x="14.300" y="6.700" width="16" height="5.400" fill="#8ab800"/>
<path d="M6.600 12.100h23.700M6.600 18.300h23.700M6.600 24.600h23.700M14.300 6.700v23.700M22.400 6.700v23.700" stroke="#2a5f90" stroke-width="1.200" fill="none"/>
<path d="M3.200 3.500h8.100V1.200q0-1 .8-.4l8.300 6.500q.5.450 0 .9l-8.300 6.500q-.8.600-.8-.4v-2.500H3.200q-1 0-1-1V4.500q0-1 1-1z" fill="#18c418"/>
</g>
<!-- REST icon -->
<g transform="translate(64,192)">
<rect x="-1" y="-.9" width="34" height="33.500" fill="none" stroke="#7e7e7e" stroke-width="2.100" stroke-dasharray="5.800 3.900"/>
<use href="#rest"/>
</g>
<!-- connectors -->

<g fill="#fff" stroke="#e8620a" stroke-width="1.300"><path d="M96.65 43.90h7.6l2.6 2.7v4.1l-2.6 2.7h-7.6z"/><path d="M213.25 43.90h7.6l2.6 2.7v4.1l-2.6 2.7h-7.6z"/><path d="M256.65 43.90h7.6l2.6 2.7v4.1l-2.6 2.7h-7.6z"/><path d="M373.25 43.90h7.6l2.6 2.7v4.1l-2.6 2.7h-7.6z"/></g>
<g fill="#fff" fill-opacity=".35" stroke="#f4b48c" stroke-opacity=".5" stroke-width="1.300"><path d="M416.65 43.90h7.6l2.6 2.7v4.1l-2.6 2.7h-7.6z"/><path d="M533.25 43.90h7.6l2.6 2.7v4.1l-2.6 2.7h-7.6z"/><path d="M256.65 203.90h7.6l2.6 2.7v4.1l-2.6 2.7h-7.6z"/><path d="M405.25 203.90h7.6l2.6 2.7v4.1l-2.6 2.7h-7.6z"/></g>
<g fill="#fff" stroke="#0b8c10" stroke-width="1.300"><path d="M96.85 204.00h7.6l2.6 2.7v4.1l-2.6 2.7h-7.6z"/><path d="M213.25 204.00h7.6l2.6 2.7v4.1l-2.6 2.7h-7.6z"/></g>
<g fill="#fff" stroke="#0a6e0c" stroke-width="1.300">
<path d="M75.900 64.200h9.400v7.300l-2.500 2.600h-4.400l-2.500-2.600z"/>
<path d="M75.900 190.600v-8.400q0-1.200 1.200-1.200h7q1.200 0 1.200 1.200v8.400z"/>
</g>
<g clip-path="url(#cc)">
<g font-size="10.500" fill="#181830" text-anchor="middle">
<text x="102.300" y="54.800">O</text><text x="218.600" y="54.800" font-size="10">M</text><text x="262.300" y="54.800">O</text><text x="376.500" y="54.800">I</text>
<text x="80.600" y="75.600" font-size="10">T</text><text x="80.600" y="193" font-size="10">T</text><text x="102.500" y="214.900">O</text><text x="216.500" y="214.900">I</text>
</g>
<g font-size="10.500" fill="#b9a79c" fill-opacity=".6" text-anchor="middle"><text x="422.300" y="54.800">O</text><text x="536.500" y="54.800">I</text><text x="262.300" y="214.800">O</text><text x="408.500" y="214.800">I</text></g>
</g>
<g font-size="14.500" fill="#12122c" text-anchor="middle">
<text x="80" y="80.300" textLength="32.500" lengthAdjust="spacingAndGlyphs">Input</text>
<text x="240" y="80.300" textLength="100.500" lengthAdjust="spacingAndGlyphs">EncodeRequest</text>
<text x="400" y="80.300" textLength="84" lengthAdjust="spacingAndGlyphs">SaveRequest</text>
<text x="80" y="240.300" textLength="104" lengthAdjust="spacingAndGlyphs">CallMetaServlet</text>
<text x="240" y="240.300" textLength="56" lengthAdjust="spacingAndGlyphs">Callback</text>
</g>
<g font-size="14.500" fill="#b7c2cf" fill-opacity=".7" text-anchor="middle">
<text x="560" y="80.300" textLength="72" lengthAdjust="spacingAndGlyphs">tLogRow_2</text>
<text x="432" y="240.300" textLength="72" lengthAdjust="spacingAndGlyphs">tLogRow_1</text>
</g>
<path d="M80.150 74V88" stroke="#0a6e0c" stroke-width="1.900"/>
<!-- hand cursor -->
<g transform="translate(87.500,217)">
<path d="M6.200 1.800q0-1.500 1.500-1.500t1.500 1.500v9.200l.4-1.700q.4-1.200 1.600-1 1.100.2 1.200 1.500l.1.700q.5-1.100 1.600-.9 1.100.3 1.200 1.500v.5q.5-.9 1.400-.6.900.3.900 1.500v4.800q0 2.400-1.200 4.400l-.5 1.600H8.500l-.6-1.300q-1.600-1.300-2.600-3.200l-3.600-5.200q-.8-1.300.2-2 1.100-.6 2 .5l2.300 2.700z" fill="#fff" stroke="#111" stroke-width="1.100" stroke-linejoin="round"/>
</g>
</svg>
</div>
<div class="abs gl">
<div class="abs" id="hsplit"><i style="top:2px"></i><i style="top:5px"></i></div>
<div class="abs" id="btabs">
<svg style="left:7.700px;top:12.200px" width="14.600" height="14.600" viewBox="0 0 16 16"><rect x="0" y="0" width="6.2" height="5" fill="#82b400"/><path d="M2.6 5v3.6q0 2.9 2.9 2.9h2.7" fill="none" stroke="#e25555" stroke-width="1"/><path d="M8 8.6a4 1.6 0 0 1 8 0v5.800a4 1.600 0 0 1-8 0z" fill="#565c6c"/><path d="M8 10.300a4 1.400 0 0 0 8 0M8 12.300a4 1.400 0 0 0 8 0M8 14.300a4 1.400 0 0 0 8 0" fill="none" stroke="#b9bec8" stroke-width=".6"/></svg>
<span style="left:44px;letter-spacing:.95px">Job</span>
<svg style="left:97.200px;top:11.300px" width="15" height="15" viewBox="0 0 15 15"><rect x="1.200" y="2.100" width="8.600" height="12.200" rx=".8" fill="none" stroke="#4a4f60" stroke-width="1"/><rect x="3.300" y=".6" width="4.400" height="2.400" rx=".5" fill="#e0e0e0" stroke="#4a4f60" stroke-width=".9"/><path d="M2.800 5.300h4.800M2.800 7.300h3.600M2.800 9.300h2.600M2.800 11.300h2" stroke="#3a78b8" stroke-width=".9"/><circle cx="10.700" cy="10.800" r="3.900" fill="#4d5263" stroke="#e0e0e0" stroke-width=".6"/><path d="M8.800 10.900l1.400 1.400 2.500-2.800" fill="none" stroke="#f2f2f2" stroke-width="1.200"/></svg>
<span style="left:119.500px;letter-spacing:1.25px">Context</span>
<div class="on"></div>
<svg style="left:186.800px;top:10.900px" width="15" height="15" viewBox="0 0 17 17"><path d="M8.500 1a7.500 7.500 0 1 0 0 15c1.300 0 2-.8 2-1.800 0-1-.9-1.300-.9-2.200 0-.9.700-1.500 1.600-1.500h1.700c1.700 0 3.100-1.300 3.100-3.200C16 3.700 12.600 1 8.500 1z" fill="#474c59"/><circle cx="4.500" cy="8.300" r="1.300" fill="#fff"/><circle cx="6.500" cy="4.800" r="1.300" fill="#fff"/><circle cx="10.500" cy="4.800" r="1.300" fill="#fff"/><circle cx="12.800" cy="8" r="1.300" fill="#fff"/></svg>
<span style="left:210.500px;color:#149a4c;letter-spacing:1.1px;-webkit-text-stroke:.2px #149a4c">Component</span>
</div>
<div class="abs" id="bpanel">
<svg style="position:absolute;left:15.900px;top:11.900px;overflow:visible" width="24" height="24" viewBox="0 0 24 24"><use href="#rest" transform="scale(.72)"/></svg>
<span class="ttl">tRESTClient_1</span>
<i class="hr"></i><i class="vr"></i><i class="gm"></i>
<span class="nav">Basic settings</span>
<span class="lb" style="top:69px;letter-spacing:-.37px">URL</span>
<span class="lb" style="top:107px;letter-spacing:.15px">PATH</span>
<span class="lb" style="top:145px;letter-spacing:.17px">METHOD</span>
<span class="lb" style="top:183px;letter-spacing:-.23px">ACCEPT_TYPE</span>
<span class="lb" style="top:215px;letter-spacing:-.2px">QUERY</span>
<span class="vl" style="top:69px;letter-spacing:.22px">context.pTACURL + "/metaServlet?" + ((String)globalMap.get("Req"))</span>
<span class="vl" style="top:107px;letter-spacing:.5px">""</span>
<span class="vl" style="top:145px;letter-spacing:-1.1px">GET</span>
<span class="vl" style="top:183px;letter-spacing:1.2px">*/*</span>
<i class="ul2" style="top:91px"></i><i class="ul2" style="top:129px"></i><i class="ul2" style="top:167px"></i><i class="ul2" style="top:205px"></i>
<i class="dd" style="top:151px"></i><i class="dd" style="top:189px"></i>
<div id="bsb"><i class="up"></i><i class="th"></i></div>
</div>
</div>
</body>
</html>
